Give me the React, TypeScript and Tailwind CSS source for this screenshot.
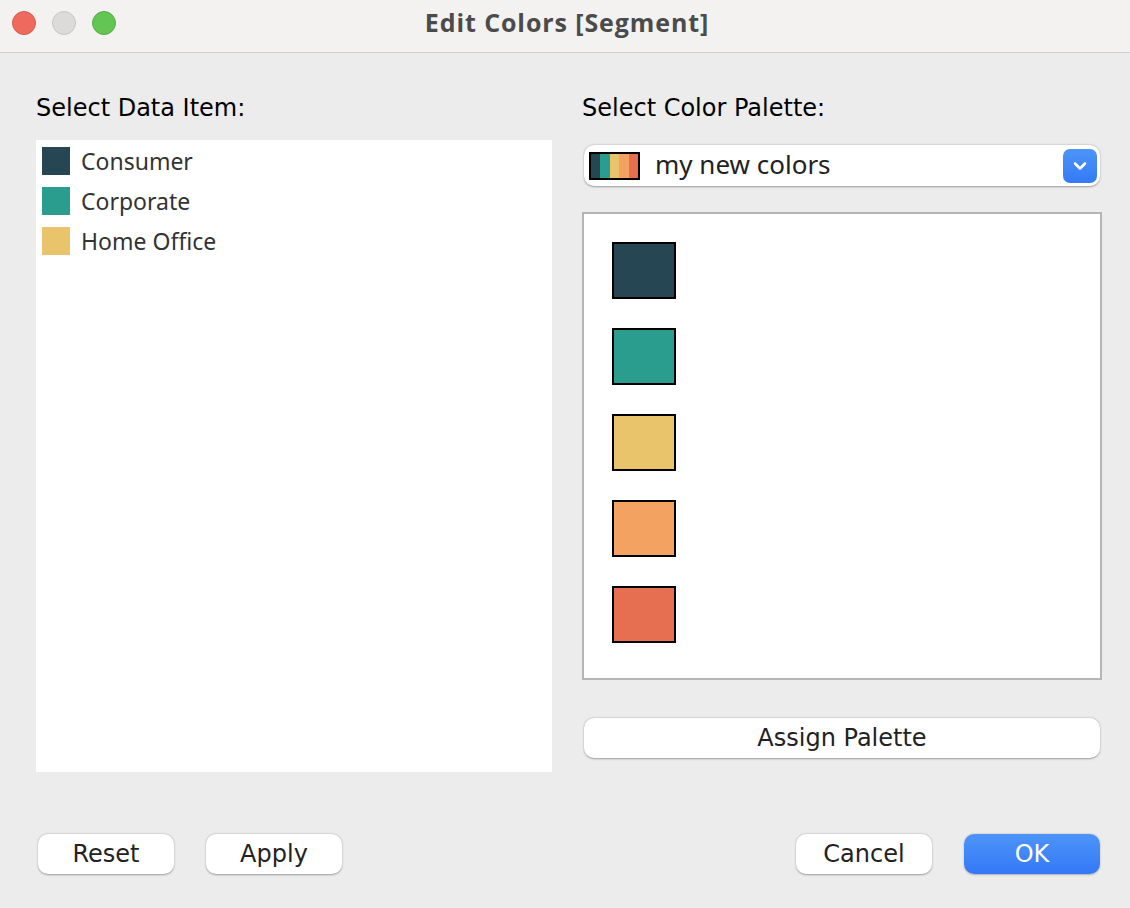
import React from "react";

const items = [
  { name: "Consumer", color: "#264653" },
  { name: "Corporate", color: "#2a9d8f" },
  { name: "Home Office", color: "#e9c46a" },
];

const palette = ["#264653", "#2a9d8f", "#e9c46a", "#f4a261", "#e76f51"];

const label = "font-['DejaVu_Sans',sans-serif] text-[24px] text-black";
const btn =
  "h-[40px] rounded-[10px] bg-white shadow-[0_0.5px_2px_rgba(0,0,0,0.35)] font-['DejaVu_Sans',sans-serif] text-[24px] text-[#222]";

export default function App() {
  return (
    <div className="w-[1130px] h-[908px] bg-[#ececec] flex flex-col overflow-hidden">
      {/* title bar */}
      <div className="relative h-[53px] shrink-0 bg-[#f3f2f0] border-b border-[#cfcfcf] flex items-center justify-center">
        <div className="absolute left-[12px] top-[11px] flex gap-[16px]">
          <span className="w-[24px] h-[24px] rounded-full bg-[#ee6a5f] border border-[#d95a50]" />
          <span className="w-[24px] h-[24px] rounded-full bg-[#dcdbd9] border border-[#c7c6c4]" />
          <span className="w-[24px] h-[24px] rounded-full bg-[#62c554] border border-[#55b046]" />
        </div>
        <span className="font-['Open_Sans',sans-serif] font-bold text-[25px] tracking-[0.9px] text-[#4b4b4b] -mt-[6px] ml-[4px]">
          Edit Colors [Segment]
        </span>
      </div>

      <div className="flex-1 flex flex-col pl-[36px] pr-[28px] pt-[40px]">
        <div className="flex gap-[30px]">
          {/* left */}
          <div className="w-[516px] shrink-0 flex flex-col">
            <div className={`${label} h-[47px] leading-[30px]`}>Select Data Item:</div>
            <div className="h-[632px] bg-white pt-[7px] px-[6px] flex flex-col">
              {items.map((it) => (
                <div key={it.name} className="h-[40px] flex items-start gap-[11px]">
                  <span className="w-[28px] h-[28px]" style={{ background: it.color }} />
                  <span className="font-['Noto_Sans',sans-serif] text-[23px] leading-[28px] text-[#333]">
                    {it.name}
                  </span>
                </div>
              ))}
            </div>
          </div>

          {/* right */}
          <div className="w-[520px] shrink-0 flex flex-col">
            <div className={`${label} h-[52px] leading-[30px]`}>Select Color Palette:</div>
            <div className="mx-[2px] h-[41px] rounded-[10px] bg-white shadow-[0_0.5px_2px_rgba(0,0,0,0.35)] flex items-center pl-[5px] pr-[3px]">
              <div className="w-[51px] h-[28px] border-2 border-black flex">
                {palette.map((c) => (
                  <span key={c} className="flex-1" style={{ background: c }} />
                ))}
              </div>
              <span className="ml-[15px] font-['Noto_Sans',sans-serif] text-[26px] text-[#222] flex-1 leading-none -mt-[3px]">
                my new colors
              </span>
              <span className="w-[34px] h-[34px] rounded-[7px] bg-gradient-to-b from-[#4d94f8] to-[#337af5] flex items-center justify-center">
                <svg width="14" height="10" viewBox="0 0 14 10" fill="none">
                  <path d="M2 2.5 L7 7.5 L12 2.5" stroke="white" strokeWidth="2.6" strokeLinecap="round" strokeLinejoin="round" />
                </svg>
              </span>
            </div>
            <div className="mt-[26px] h-[468px] bg-white border-2 border-[#b5b5b5] pt-[28px] pl-[28px] flex flex-col gap-[29px]">
              {palette.map((c) => (
                <span key={c} className="w-[64px] h-[57px] border-2 border-black" style={{ background: c }} />
              ))}
            </div>
            <button className={`${btn} mt-[38px] mx-[2px]`}>Assign Palette</button>
          </div>
        </div>

        <div className="mt-[62px] flex items-center pl-[2px] pr-[2px]">
          <button className={`${btn} w-[136px]`}>Reset</button>
          <button className={`${btn} w-[136px] ml-[32px]`}>Apply</button>
          <div className="flex-1" />
          <button className={`${btn} w-[136px]`}>Cancel</button>
          <button className="ml-[32px] w-[136px] h-[40px] rounded-[10px] bg-gradient-to-b from-[#4d94f8] to-[#3478f6] shadow-[0_0.5px_2px_rgba(0,0,0,0.25)] font-['DejaVu_Sans',sans-serif] text-[24px] text-white">
            OK
          </button>
        </div>
      </div>
    </div>
  );
}
